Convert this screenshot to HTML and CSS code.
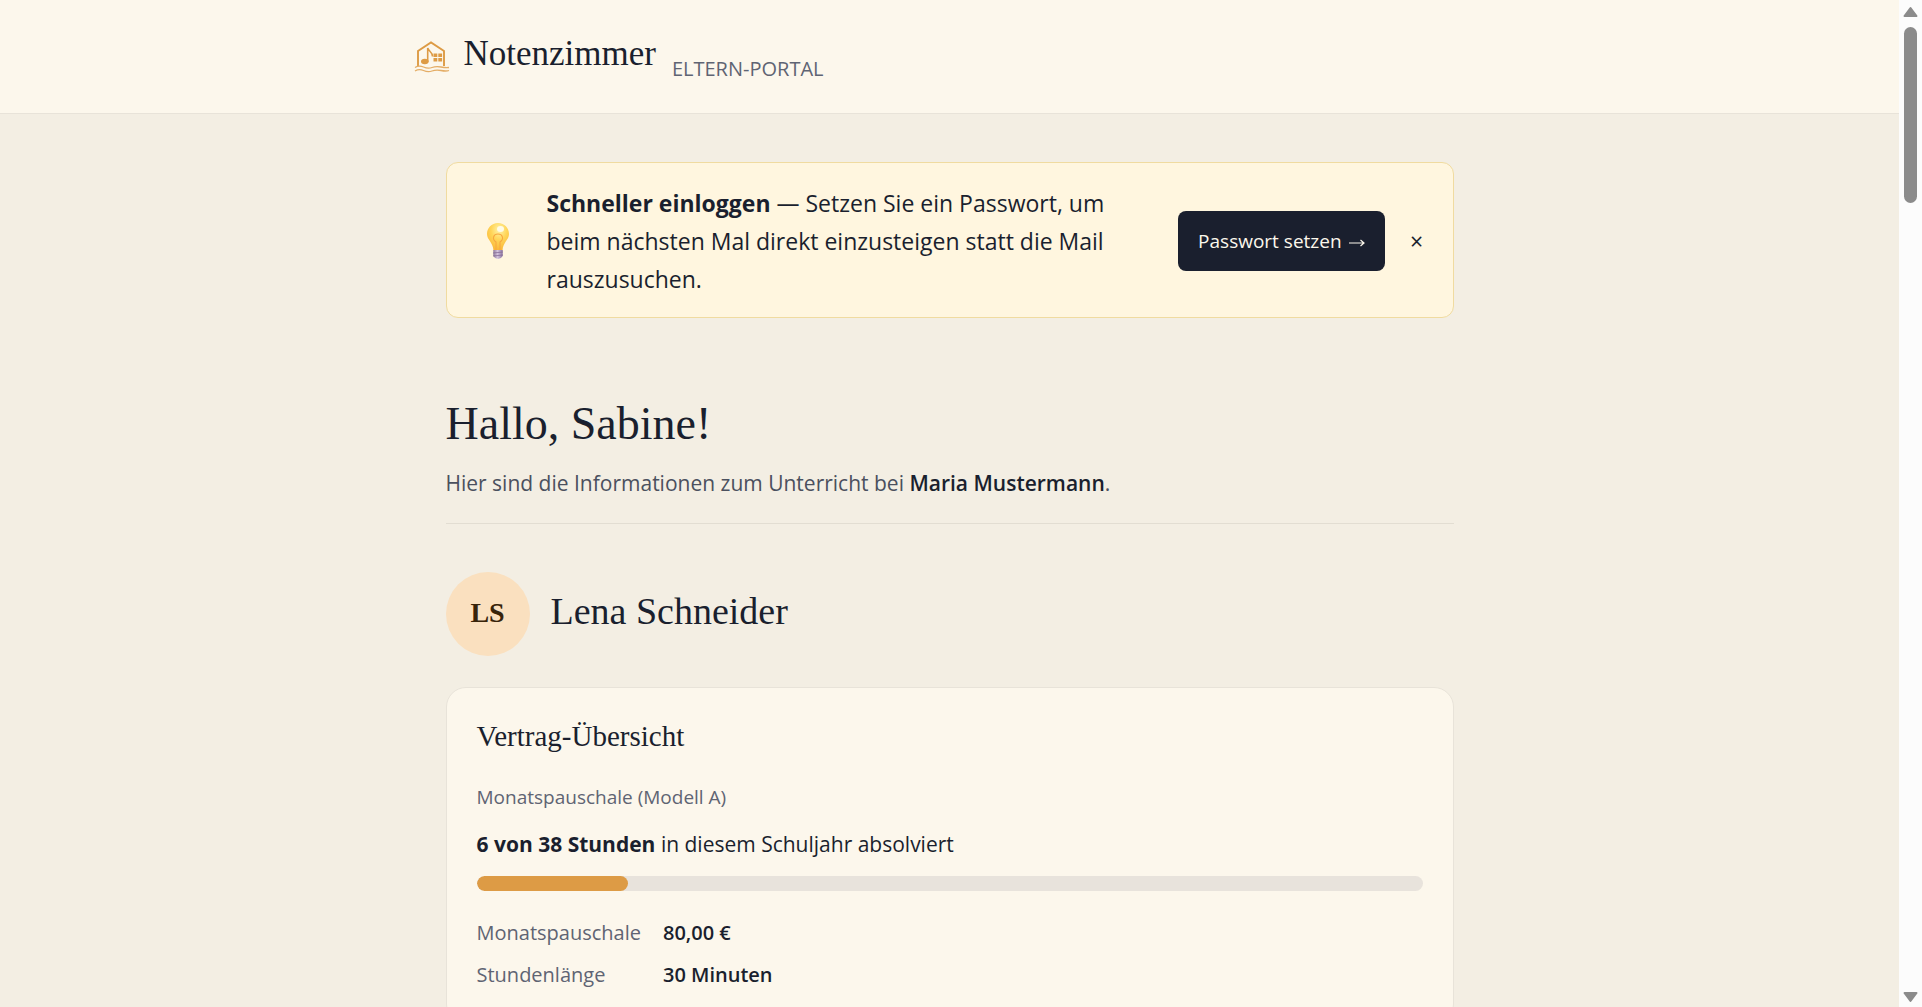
FILE: index.html
```html
<!DOCTYPE html>
<html lang="de">
<head>
    <meta charset="UTF-8">
    <meta name="viewport" content="width=device-width, initial-scale=1.0">
    <title>Notenzimmer – Eltern-Portal</title>
    <link rel="stylesheet" href="styles.css">
</head>
<body>
    <div class="page">
        <header class="topbar">
            <div class="topbar-inner">
                <svg class="logo" viewBox="0 0 36 32" aria-hidden="true">
                    <path d="M4 25V10L17 1.500L30 10V25" fill="none" stroke="#dd9b45" stroke-width="1.900"/>
                    <ellipse cx="10.800" cy="20.500" rx="3.800" ry="2.800" fill="#dd9b45"/>
                    <path d="M13.700 21V7C14.500 10.500 18.500 10.500 18.500 15.500" fill="none" stroke="#dd9b45" stroke-width="1.600"/>
                    <path d="M19.500 12.500h3.800v3.500h-3.800zM24.300 12.500h3.800v3.500h-3.800zM19.500 17h3.800v3.500h-3.800zM24.300 17h3.800v3.500h-3.800z" fill="#dd9b45"/>
                    <path d="M1 26.500Q5 24 9.500 26T18 26.500T27 26T35 26.500M1 30Q5 27.500 9.500 29.500T18 30T27 29.500T35 29.500" fill="none" stroke="#e4ad66" stroke-width="1.300"/>
                </svg>
                <span class="brand">Notenzimmer</span>
                <span class="portal">ELTERN-PORTAL</span>
            </div>
        </header>

        <main class="content">
            <section class="banner">
                <svg class="bulb" viewBox="0 0 24 38" aria-hidden="true">
                    <defs>
                        <radialGradient id="glass" cx="0.550" cy="0.250" r="0.800">
                            <stop offset="0" stop-color="#fff3a8"/>
                            <stop offset="0.450" stop-color="#ffd558"/>
                            <stop offset="1" stop-color="#f9b233"/>
                        </radialGradient>
                        <linearGradient id="socket">
                            <stop offset="0" stop-color="#8f7a9c"/>
                            <stop offset="0.450" stop-color="#d3c3dc"/>
                            <stop offset="1" stop-color="#8a72a0"/>
                        </linearGradient>
                    </defs>
                    <path d="M12 1C5.500 1 1 6 1 12C1 18 7 20 7.500 28.500H16.500C17 20 23 18 23 12C23 6 18.500 1 12 1Z" fill="url(#glass)"/>
                    <path d="M10 28V20C5.500 17 7.500 12 12 12S18.500 17 14 20V28" fill="none" stroke="#f7a840" stroke-width="1.100"/>
                    <ellipse cx="14.500" cy="7" rx="3.500" ry="3" fill="#fffbe6"/>
                    <path d="M7.300 28H16.700V34Q15 37 12 37T7.300 34Z" fill="url(#socket)"/>
                    <path d="M7 31L17 30M7 34L17 33" stroke="#80648f" stroke-width="0.700"/>
                </svg>
                <p class="banner-text"><strong>Schneller einloggen</strong> — Setzen Sie ein Passwort, um beim nächsten Mal direkt einzusteigen statt die Mail rauszusuchen.</p>
                <button class="btn-password" type="button">Passwort setzen
                    <svg class="arrow" viewBox="0 0 16 10" aria-hidden="true"><path d="M0 5H15M11.500 2L15 5L11.500 8" fill="none" stroke="currentColor" stroke-width="1.200"/></svg>
                </button>
                <button class="btn-close" type="button" aria-label="Schließen">×</button>
            </section>

            <section class="greeting">
                <h1>Hallo, Sabine!</h1>
                <p>Hier sind die Informationen zum Unterricht bei <strong>Maria Mustermann</strong>.</p>
            </section>

            <section class="student">
                <div class="avatar">LS</div>
                <h2>Lena Schneider</h2>
            </section>

            <section class="card">
                <h3>Vertrag-Übersicht</h3>
                <p class="model">Monatspauschale (Modell A)</p>
                <p class="hours"><strong>6 von 38 Stunden</strong> in diesem Schuljahr absolviert</p>
                <div class="track" role="progressbar" aria-label="Absolvierte Stunden" aria-valuemin="0" aria-valuemax="38" aria-valuenow="6">
                    <div class="fill" style="width: 16%"></div>
                </div>
                <dl class="facts">
                    <dt>Monatspauschale</dt>
                    <dd>80,00 €</dd>
                    <dt>Stundenlänge</dt>
                    <dd>30 Minuten</dd>
                </dl>
            </section>
        </main>
    </div>

    <div class="scrollbar" aria-hidden="true">
        <svg class="scroll-arrow" viewBox="0 0 15 12"><path d="M7.500 2L13.500 10H1.500Z"/></svg>
        <div class="thumb"></div>
        <svg class="scroll-arrow down" viewBox="0 0 15 12"><path d="M1.500 2H13.500L7.500 10Z"/></svg>
    </div>
</body>
</html>
```
FILE: styles.css
```css
*{
    margin: 0;
    padding: 0;
    box-sizing: border-box;
}
body{
    display: flex;
    height: 100vh;
    overflow: hidden;
    background-color: #f3eee3;
    color: #1a1f2e;
    font-family: "Open Sans", "Noto Sans", sans-serif;
    font-size: 21px;
    line-height: 38px;
}
h1, h2, h3, .brand, .avatar{
    font-family: "Liberation Serif", serif;
    font-weight: 400;
}
.page{
    flex: 1;
    min-width: 0;
    overflow: hidden;
}

/* header */
.topbar{
    background-color: #fcf7ec;
    border-bottom: 1px solid #e8e3d9;
}
.topbar-inner{
    display: flex;
    align-items: center;
    max-width: 1072px;
    height: 113px;
    margin: 0 auto;
}
.logo{
    width: 36px;
    height: 32px;
}
.brand{
    margin: 0 16px 6px 14px;
    font-size: 35px;
}
.portal{
    padding-top: 24px;
    font-size: 20px;
    color: #5f6473;
}

/* content */
.content{
    max-width: 1008px;
    margin: 0 auto;
    padding-top: 48px;
}
.banner{
    display: flex;
    align-items: center;
    padding: 21px 22px 19px 39px;
    background-color: #fff6df;
    border: 1px solid #f0dba0;
    border-radius: 12px;
}
.bulb{
    width: 24px;
    height: 38px;
    margin-right: 37px;
}
.banner-text{
    flex: 1;
    margin-right: 38px;
    font-size: 23px;
}
button{
    border: none;
    font-family: inherit;
    cursor: pointer;
}
.btn-password{
    height: 60px;
    padding: 0 20px;
    border-radius: 8px;
    background-color: #1a1f2e;
    color: #fcf7ec;
    font-size: 19px;
}
.arrow{
    width: 16px;
    height: 10px;
    margin-left: 2px;
}
.btn-close{
    width: 28px;
    margin-left: 18px;
    background: none;
    color: #1a1f2e;
    font-size: 23px;
}
.greeting{
    margin-top: 76px;
    padding-bottom: 21px;
    border-bottom: 1px solid #e2ddd2;
    color: #4b505e;
}
h1{
    margin-bottom: 10px;
    color: #1a1f2e;
    font-size: 46px;
    line-height: 60px;
}
.greeting strong{
    color: #1a1f2e;
    font-weight: 600;
}
.student{
    display: flex;
    align-items: center;
    gap: 21px;
    margin: 48px 0 31px;
}
.avatar{
    width: 84px;
    height: 84px;
    border-radius: 50%;
    background-color: #fae0bf;
    color: #38240a;
    font-size: 28px;
    font-weight: 700;
    line-height: 82px;
    text-align: center;
}
h2{
    padding-bottom: 6px;
    font-size: 38px;
}

/* contract card */
.card{
    padding: 29px 30px;
    background-color: #fcf7ec;
    border: 1px solid #e8e3d9;
    border-radius: 20px;
}
h3{
    margin-bottom: 23px;
    font-size: 29px;
}
.model{
    margin-bottom: 9px;
    color: #5f6473;
    font-size: 19px;
}
.hours{
    margin-bottom: 13px;
}
.track{
    height: 15px;
    margin-bottom: 23px;
    overflow: hidden;
    border-radius: 8px;
    background-color: #e8e3dc;
}
.fill{
    height: 100%;
    border-radius: 8px;
    background-color: #dd9b45;
}
.facts{
    display: grid;
    grid-template-columns: max-content 1fr;
    gap: 4px 22px;
    font-size: 20px;
}
dt{
    color: #5f6473;
}
dd{
    font-weight: 600;
}

/* scrollbar */
.scrollbar{
    display: flex;
    flex-direction: column;
    align-items: center;
    width: 23px;
    padding: 6px 0 4px;
    background-color: #fcfcfc;
}
.scroll-arrow{
    width: 15px;
    height: 12px;
    fill: #8b8b8b;
    stroke: #8b8b8b;
    stroke-width: 2;
    stroke-linejoin: round;
}
.scroll-arrow.down{
    margin-top: auto;
}
.thumb{
    width: 13px;
    height: 176px;
    margin-top: 9px;
    border-radius: 7px;
    background-color: #8b8b8b;
}
```
